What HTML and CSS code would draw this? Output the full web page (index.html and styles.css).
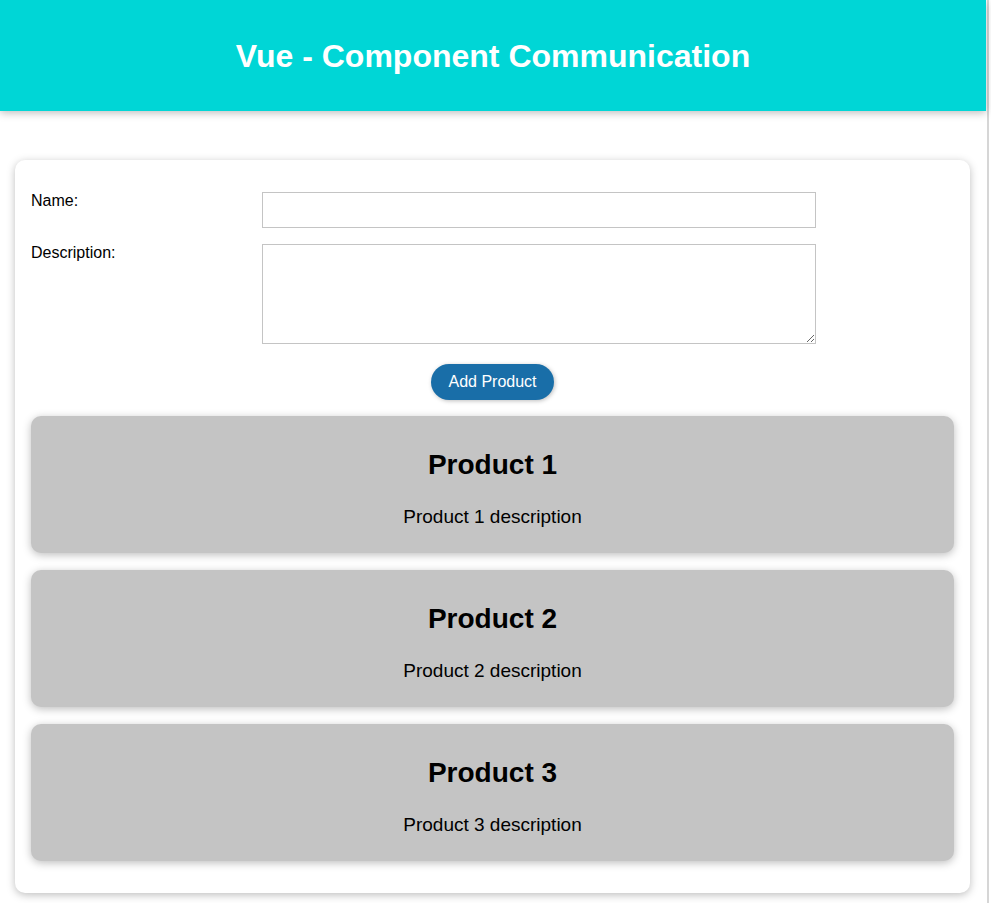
FILE: index.html
```html
<!DOCTYPE html>
<html>
<head>
<meta charset="utf-8">
<link rel="stylesheet" href="styles.css">
</head>
<body>
<div class="frame">
  <div class="page">
    <header class="header">
      <h1 class="title">Vue - Component Communication</h1>
    </header>
    <main class="card">
      <form class="form">
        <div class="row">
          <label class="label" for="name">Name:</label>
          <input class="input" id="name" type="text">
        </div>
        <div class="row">
          <label class="label" for="desc">Description:</label>
          <textarea class="textarea" id="desc"></textarea>
        </div>
        <div class="actions">
          <button class="btn" type="button">Add Product</button>
        </div>
      </form>
      <div class="products">
        <section class="product">
          <h2 class="product-title">Product 1</h2>
          <p class="product-desc">Product 1 description</p>
        </section>
        <section class="product">
          <h2 class="product-title">Product 2</h2>
          <p class="product-desc">Product 2 description</p>
        </section>
        <section class="product">
          <h2 class="product-title">Product 3</h2>
          <p class="product-desc">Product 3 description</p>
        </section>
      </div>
    </main>
  </div>
  <div class="edge"></div>
</div>
</body>
</html>
```
FILE: styles.css
```css
html, body {
  margin: 0;
  padding: 0;
  background: #fff;
  font-family: "Liberation Sans", Arial, Helvetica, sans-serif;
  color: #000;
}
.frame {
  display: flex;
  min-height: 903px;
}
.page {
  width: 986px;
  flex: none;
}
.edge {
  width: 2px;
  margin-left: 1px;
  background: #d6d6d6;
  flex: none;
}
.header {
  height: 111px;
  background: #00d6d6;
  box-shadow: 0 2px 8px rgba(0, 0, 0, 0.26);
  display: flex;
  align-items: center;
  justify-content: center;
  position: relative;
}
.title {
  margin: 0;
  color: #fff;
  font-size: 32px;
  font-weight: bold;
  line-height: 36px;
  padding-top: 1px;
}
.card {
  margin: 49px 0 10px 15px;
  width: 955px;
  box-sizing: border-box;
  padding: 32px 16px;
  background: #fff;
  border-radius: 10px;
  box-shadow: 0 2px 8px rgba(0, 0, 0, 0.26);
}
.form {
  display: flex;
  flex-direction: column;
  gap: 16px;
}
.row {
  display: grid;
  grid-template-columns: 231px 554px;
}
.label {
  font-size: 16px;
  line-height: 18px;
}
.input, .textarea {
  box-sizing: border-box;
  width: 554px;
  border: 1px solid #c4c4c4;
  margin: 0;
  font: inherit;
  background: #fff;
}
.input { height: 36px; }
.textarea { height: 100px; display: block; }
.actions {
  display: flex;
  justify-content: center;
  margin-top: 4px;
}
.btn {
  height: 36px;
  padding: 0 17px;
  border: none;
  border-radius: 18px;
  background: #196ea8;
  color: #fff;
  font-family: inherit;
  font-size: 16px;
  box-shadow: 1px 1px 4px rgba(0, 0, 0, 0.26);
}
.products {
  display: flex;
  flex-direction: column;
  gap: 17px;
  margin-top: 16px;
}
.product {
  height: 137px;
  box-sizing: border-box;
  padding-top: 33px;
  background: #c4c4c4;
  border-radius: 10px;
  box-shadow: 0 2px 8px rgba(0, 0, 0, 0.26);
  text-align: center;
}
.product-title {
  margin: 0 0 24px;
  font-size: 28px;
  line-height: 32px;
  font-weight: bold;
}
.product-desc {
  margin: 0;
  font-size: 19px;
  line-height: 24px;
}
```
